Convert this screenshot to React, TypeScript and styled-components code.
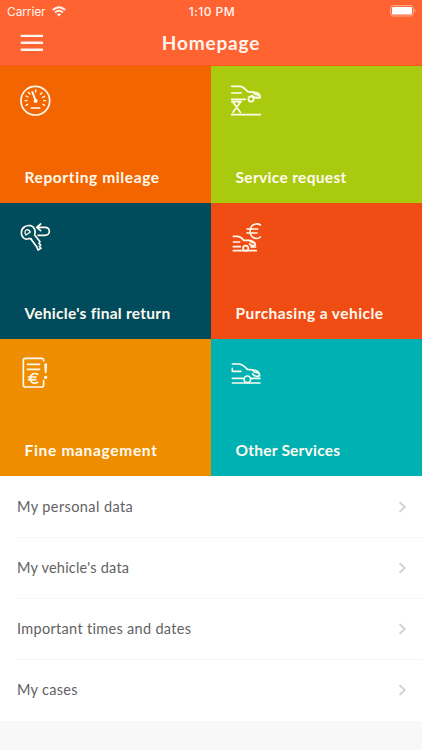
import React from "react";
import styled, { createGlobalStyle } from "styled-components";

const GlobalStyle = createGlobalStyle`
  * { box-sizing: border-box; }
  body { margin: 0; background: #f8f8f8; }
`;

const Screen = styled.main`
  width: 100%;
  max-width: 422px;
  min-height: 750px;
  background: #f8f8f8;
  font-family: Lato, sans-serif;
`;

const Header = styled.header`
  height: 66px;
  background: #ff6332;
  color: #fff5ee;
  border-bottom: 1px solid #f65a20;
`;

const StatusBar = styled.div`
  height: 22px;
  padding: 0 5px 0 7px;
  display: grid;
  grid-template-columns: 1fr auto 1fr;
  align-items: center;
  font-family: Inter, sans-serif;
  font-size: 12px;
`;

const Carrier = styled.div`
  display: flex;
  align-items: center;
  gap: 6px;
  letter-spacing: -0.12px;
`;

const Clock = styled.time`
  font-weight: 500;
  letter-spacing: 0.45px;
`;

const BatterySlot = styled.div`
  display: flex;
  justify-content: flex-end;
`;

const NavBar = styled.div`
  height: 42px;
  padding: 0 20px;
  display: grid;
  grid-template-columns: 24px 1fr 24px;
  align-items: center;
`;

const MenuButton = styled.button`
  display: flex;
  padding: 0;
  border: 0;
  background: none;
  color: inherit;
`;

const Title = styled.h1`
  margin: 0;
  text-align: center;
  font-size: 19px;
  line-height: 24px;
  font-weight: 700;
  letter-spacing: 0.85px;
`;

const Tiles = styled.section`
  display: grid;
  grid-template-columns: 1fr 1fr;
  grid-template-rows: 136.6px 136.8px 136.6px;
`;

const Tile = styled.a<{ $color: string }>`
  display: flex;
  flex-direction: column;
  justify-content: space-between;
  padding: 9px 10px 14px;
  background: ${(p) => p.$color};
  color: #fffaf0;
`;

const TileLabel = styled.span<{ $spacing: number }>`
  padding-left: 14.5px;
  font-size: 15.5px;
  line-height: 24px;
  font-weight: 700;
  letter-spacing: ${(p) => p.$spacing}px;
  white-space: nowrap;
`;

const TileIcon = styled.svg`
  width: 50px;
  height: 50px;
  fill: none;
  stroke: currentColor;
  stroke-width: 5;
  stroke-linecap: round;
  stroke-linejoin: round;
`;

const List = styled.nav`
  background: #fff;
  height: 245px;
  padding-left: 16px;
`;

const Row = styled.a<{ $spacing: number }>`
  height: 60.9px;
  padding: 1px 15px 0 1px;
  display: flex;
  align-items: center;
  justify-content: space-between;
  color: #626262;
  font-size: 14.5px;
  letter-spacing: ${(p) => p.$spacing}px;
  & + & { border-top: 1px solid #f5f5f5; padding-top: 0; }
`;

const CarBody = () => (
  <>
    <path d="M32 34H58Q67 35 80 50L101 52Q118 54 117 67L104 68Q98 68 93 61" />
    <path d="M97 53Q102 61 115 59" />
    <path d="M32 54H61" />
  </>
);

const icons = {
  mileage: (
    <>
      <circle cx="76" cy="77" r="43" />
      <path d="M67 51L77 77" strokeWidth="6" />
      <circle cx="77" cy="78" r="3.5" fill="currentColor" />
      <path d="M64 99H89" />
      <path d="M45 77H51M48 63L54 66M55 52L60 57M77 45V51M96 53L91 58M104 64L98 67M107 77H101M48 91L53 88M104 91L99 88" strokeWidth="4" />
    </>
  ),
  service: (
    <>
      <CarBody />
      <circle cx="90" cy="72" r="8" />
      <path d="M32 73H73M32 80H60M36 82L58 112M58 82L36 112M32 119H118M105 68H117" />
    </>
  ),
  key: (
    <>
      <path d="M62 41C48 38 34 48 34 62C34 76 45 84 54 80L62 80L80 104L84 114L93 109L88 103L92 99L87 94L90 89L74 69C78 58 74 44 62 41Z" />
      <path d="M45 63C44 54 51 51 57 55L61 60L48 69Z" strokeWidth="4" />
      <path d="M63 79L78 101" strokeWidth="3" />
      <path d="M92 36L80 46L92 56M81 46H104Q118 46 118 58Q118 70 104 70H84" />
    </>
  ),
  purchase: (
    <>
      <path d="M37 73H50Q60 74 68 85H84Q101 87 103 99Q92 104 86 96M86 87Q92 93 102 93M37 90H56M37 104H58M37 116H106M90 105H104" />
      <circle cx="74" cy="109" r="8" />
      <path d="M118 39Q112 34 104 36C82 39 82 76 103 79Q112 81 118 75M78 51H110M78 63H108" />
    </>
  ),
  fine: (
    <>
      <path d="M101 38V37Q101 31 95 31H46Q40 31 40 37V111Q40 117 46 117H95Q101 117 101 111V98" />
      <path d="M52 49H89M52 64H89" />
      <path d="M83 79C72 73 61 79 61 91C61 105 73 109 83 103M55 87H78M55 95H77" />
      <path d="M105 49L107 73L109 49Z" strokeWidth="5" />
      <circle cx="107" cy="88" r="3" fill="currentColor" strokeWidth="4" />
    </>
  ),
  car: (
    <>
      <path d="M34 48H55Q65 49 79 64L98 66Q115 68 116 83Q103 88 95 78" />
      <path d="M95 67Q100 75 113 74M34 61V70H60M34 91H66M91 91H117M34 105H117" />
      <circle cx="79" cy="94" r="10" />
    </>
  ),
};

const tiles: { label: string; color: string; icon: keyof typeof icons; spacing: number }[] = [
  { label: "Reporting mileage", color: "#f26500", icon: "mileage", spacing: 0.61 },
  { label: "Service request", color: "#a9ca0e", icon: "service", spacing: 0.33 },
  { label: "Vehicle's final return", color: "#004c5c", icon: "key", spacing: 0.27 },
  { label: "Purchasing a vehicle", color: "#ef4d14", icon: "purchase", spacing: 0.44 },
  { label: "Fine management", color: "#ee8d00", icon: "fine", spacing: 0.68 },
  { label: "Other Services", color: "#00b1b3", icon: "car", spacing: 0.23 },
];

const rows = [
  { label: "My personal data", spacing: 0.4 },
  { label: "My vehicle's data", spacing: 0.22 },
  { label: "Important times and dates", spacing: 0.31 },
  { label: "My cases", spacing: 0.3 },
];

export default function App() {
  return (
    <Screen>
      <GlobalStyle />
      <Header>
        <StatusBar>
          <Carrier>
            Carrier
            <svg width="14" height="11" viewBox="0 0 14 11" fill="none" stroke="currentColor" strokeWidth="2">
              <path d="M.8 4.1Q7-1.7 13.2 4.1M3.1 6.5Q7 3.1 10.9 6.5" />
              <path d="M4.9 8.4Q7 6.8 9.1 8.4L7 10.6Z" fill="currentColor" stroke="none" />
            </svg>
          </Carrier>
          <Clock>1:10 PM</Clock>
          <BatterySlot>
            <svg width="27" height="12" viewBox="0 0 27 12">
              <rect x=".6" y=".6" width="22.8" height="10.4" rx="2.5" fill="none" stroke="#ffad91" />
              <rect x="2" y="2" width="20" height="7.6" rx="1" fill="#fff" />
              <path d="M24.7 4Q27 5.8 24.7 7.6Z" fill="#ffad91" />
            </svg>
          </BatterySlot>
        </StatusBar>
        <NavBar>
          <MenuButton aria-label="Menu">
            <svg width="24" height="18" viewBox="0 0 24 18" stroke="currentColor" strokeWidth="2.4">
              <path d="M.7 1.9H23M.7 8.8H23M.7 15.7H23" />
            </svg>
          </MenuButton>
          <Title>Homepage</Title>
        </NavBar>
      </Header>
      <Tiles>
        {tiles.map((t) => (
          <Tile key={t.label} $color={t.color}>
            <TileIcon viewBox="0 0 150 150">{icons[t.icon]}</TileIcon>
            <TileLabel $spacing={t.spacing}>{t.label}</TileLabel>
          </Tile>
        ))}
      </Tiles>
      <List>
        {rows.map((r) => (
          <Row key={r.label} $spacing={r.spacing}>
            <span>{r.label}</span>
            <svg width="9" height="12" viewBox="0 0 9 12" fill="none" stroke="#d2d2d2" strokeWidth="1.9">
              <path d="M1.5 1L6.7 6L1.5 11" />
            </svg>
          </Row>
        ))}
      </List>
    </Screen>
  );
}
